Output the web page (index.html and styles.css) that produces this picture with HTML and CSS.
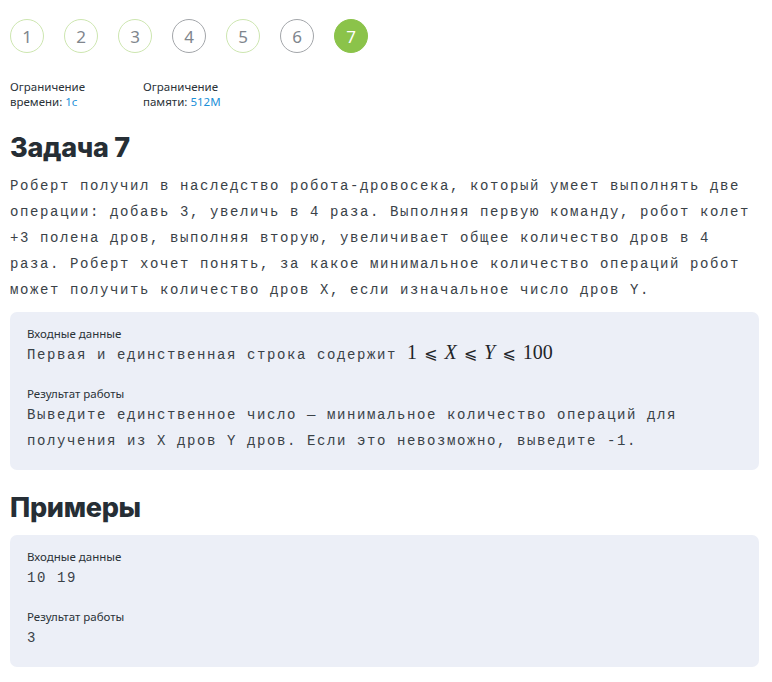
FILE: index.html
```html
<!DOCTYPE html>
<html lang="ru">
<head>
<meta charset="utf-8">
<link rel="stylesheet" href="styles.css">
</head>
<body>
<div class="page">
  <nav class="steps">
    <span class="step done">1</span>
    <span class="step done">2</span>
    <span class="step done">3</span>
    <span class="step">4</span>
    <span class="step done">5</span>
    <span class="step">6</span>
    <span class="step active">7</span>
  </nav>
  <div class="limits">
    <div class="limit"><span class="line">Ограничение</span><span class="line">времени: <span class="val">1с</span></span></div>
    <div class="limit"><span class="line">Ограничение</span><span class="line">памяти: <span class="val">512M</span></span></div>
  </div>
  <h1 class="title">Задача 7</h1>
  <p class="text">Роберт получил в наследство робота-дровосека, который умеет выполнять две операции: добавь 3, увеличь в 4 раза. Выполняя первую команду, робот колет +3 полена дров, выполняя вторую, увеличивает общее количество дров в 4 раза. Роберт хочет понять, за какое минимальное количество операций робот может получить количество дров X, если изначальное число дров Y.</p>
  <section class="box">
    <div class="label">Входные данные</div>
    <div class="text">Первая и единственная строка содержит <span class="math">1<span class="rel">⩽</span><i>X</i><span class="rel">⩽</span><i>Y</i><span class="rel">⩽</span>100</span></div>
    <div class="label gap">Результат работы</div>
    <div class="text">Выведите единственное число — минимальное количество операций для получения из X дров Y дров. Если это невозможно, выведите -1.</div>
  </section>
  <h2 class="title examples">Примеры</h2>
  <section class="box second">
    <div class="label">Входные данные</div>
    <div class="text">10 19</div>
    <div class="label gap">Результат работы</div>
    <div class="text">3</div>
  </section>
</div>
</body>
</html>
```
FILE: styles.css
```css
* { box-sizing: border-box; }
html, body { margin: 0; padding: 0; background: #ffffff; }
.page {
  width: 749px;
  margin-left: 10px;
  padding-top: 19px;
  color: #2a3238;
  font-family: "Noto Sans", "Open Sans", sans-serif;
}
.steps {
  display: flex;
  gap: 20px;
}
.step {
  width: 34px;
  height: 34px;
  border-radius: 50%;
  border: 1px solid #a3a6aa;
  display: flex;
  align-items: center;
  justify-content: center;
  font-family: "Noto Sans", sans-serif;
  font-size: 17px;
  color: #80868d;
}
.step.done { border-color: #cde6b0; }
.step.active {
  background: #8bc34a;
  border-color: #8bc34a;
  color: #ffffff;
}
.limits {
  display: flex;
  margin-top: 26px;
}
.limit {
  width: 133px;
  font-size: 11.5px;
  line-height: 16px;
  color: #2a3238;
}
.limit .line { display: block; height: 15px; line-height: 15px; }
.val { color: #1b8fd8; }
.title {
  margin: 23px 0 0;
  font-family: "Inter", sans-serif;
  font-weight: 800;
  font-size: 27px;
  line-height: 32px;
  letter-spacing: -0.3px;
  color: #262e35;
}
.text {
  margin: 9px 0 0;
  font-family: "Liberation Mono", monospace;
  font-size: 14px;
  letter-spacing: 1.6px;
  line-height: 26px;
  color: #3a4248;
}
.box {
  margin-top: 9px;
  background: #eceff7;
  border-radius: 7px;
  padding: 14px 17px 16px;
}
.box .text { margin: 0; }
.label {
  font-size: 11.5px;
  line-height: 16px;
  color: #2a3238;
}
.label.gap { margin-top: 18px; }
.math {
  font-family: "Liberation Serif", "DejaVu Serif", serif;
  font-size: 20px;
  line-height: 1;
  letter-spacing: 0;
  color: #1f2529;
}
.math .rel {
  font-family: "DejaVu Sans", serif;
  font-size: 16px;
  margin: 0 7px;
}
.examples { margin-top: 22px; }
.box.second { margin-top: 11px; }
```
